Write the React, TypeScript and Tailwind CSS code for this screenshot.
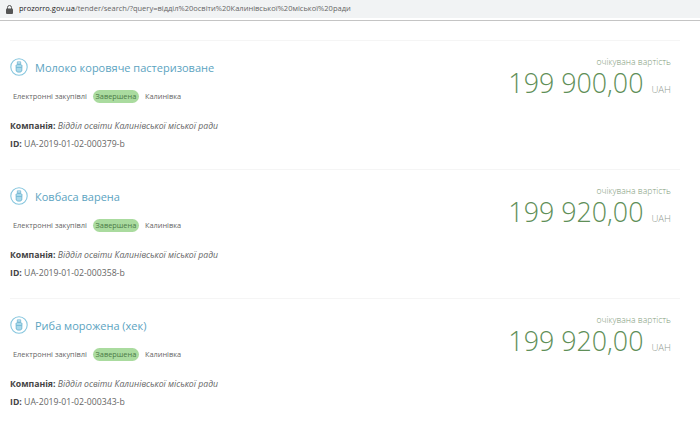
const items = [
  { title: "Молоко коровяче пастеризоване", price: "199 900,00", id: "UA-2019-01-02-000379-b" },
  { title: "Ковбаса варена", price: "199 920,00", id: "UA-2019-01-02-000358-b" },
  { title: "Риба морожена (хек)", price: "199 920,00", id: "UA-2019-01-02-000343-b" },
];

function Icon() {
  return (
    <svg width="18" height="18" viewBox="0 0 18 18" fill="none" className="shrink-0">
      <circle cx="9" cy="9" r="8.2" stroke="#86c6de" strokeWidth="1.1" fill="#fff" />
      <path d="M6 7.5 C6 6 12 6 12 7.5 L11.8 13 C11.6 14.6 6.4 14.6 6.2 13 Z" fill="#a9d9ea" stroke="#5aa9c9" strokeWidth="0.7" />
      <path d="M7.3 3.8 h3.4 v2.2 h-3.4 z" fill="#c5e6f1" stroke="#5aa9c9" strokeWidth="0.6" />
      <path d="M6.4 9.5 h5.2" stroke="#5aa9c9" strokeWidth="0.6" />
    </svg>
  );
}

function Row({ title, price, id, last }: { title: string; price: string; id: string; last?: boolean }) {
  return (
    <div className={last ? "flex h-[129px] justify-between" : "flex h-[129px] justify-between border-b border-[#f5f5f5]"}>
      <div className="flex flex-col">
        <div className="mt-[17px] flex h-[18px] items-center gap-[7px]">
          <Icon />
          <span className="text-[11px] leading-none text-[#5ba3bf]">{title}</span>
        </div>
        <div className="mt-[14px] flex h-[13px] items-center pl-[3px] text-[7.4px] text-[#666]">
          <span>Електронні закупівлі</span>
          <span className="ml-[6px] flex h-[13px] w-[46px] items-center justify-center rounded-full bg-[#aadb9f] text-[#4a7a46]">Завершена</span>
          <span className="ml-[6px]">Калинівка</span>
        </div>
        <div className="mt-[17px] text-[8.7px] leading-[13px] text-[#666]">
          <b className="font-bold text-[#444]">Компанія: </b>
          <i>Відділ освіти Калинівської міської ради</i>
        </div>
        <div className="mt-[5px] text-[8.7px] leading-[13px] text-[#666]">
          <b className="font-bold text-[#444]">ID: </b>
          {id}
        </div>
      </div>
      <div className="flex flex-col items-end pr-[9px]">
        <div className="mt-[15px] text-[8.6px] leading-[12px] font-light text-[#7f9c7b]">очікувана вартість</div>
        <div className="flex h-[32px] items-baseline">
          <span className="text-[26.8px] leading-[30px] font-light text-[#5f8f58]">{price}</span>
          <span className="ml-[8px] text-[9.6px] font-light text-[#8f988f]">UAH</span>
        </div>
      </div>
    </div>
  );
}

export default function App() {
  return (
    <div className="h-[422px] w-[700px] overflow-hidden bg-white font-['Open_Sans',sans-serif]">
      <div className="h-[21px] border-b border-[#c4c4c4]">
        <div className="flex h-[18px] items-center gap-[6px] bg-[#f1f3f4] pl-[6px] text-[7.5px] text-[#666]">
          <svg width="7" height="9" viewBox="0 0 7 9"><rect y="3.5" width="7" height="5.5" rx="1" fill="#555" /><path d="M1.5 4 V2.5 a2 2 0 0 1 4 0 V4" stroke="#555" fill="none" /></svg>
          <span className="whitespace-nowrap"><span className="text-[#222]">prozorro.gov.ua</span>/tender/search/?query=відділ%20освіти%20Калинівської%20міської%20ради</span>
        </div>
      </div>
      <div className="mx-[10px] mt-[19px] w-[670px] border-t border-[#f5f5f5]">
        {items.map((x, i) => (
          <Row key={x.id} {...x} last={i === 2} />
        ))}
      </div>
    </div>
  );
}
